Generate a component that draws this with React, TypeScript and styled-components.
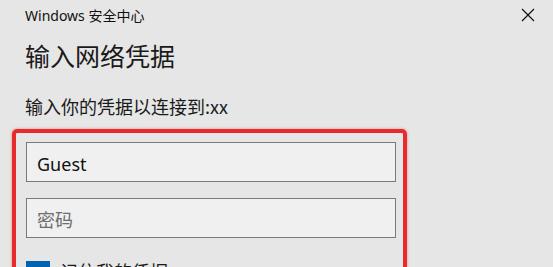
import React from "react";
import styled, { createGlobalStyle } from "styled-components";

const Global = createGlobalStyle`
  html, body { margin: 0; padding: 0; background: #e6e6e6; }
  body { font-family: "Segoe UI", "Noto Sans", "Noto Sans CJK SC", sans-serif; }
`;

const Dialog = styled.div`
  width: 553px;
  height: 267px;
  overflow: hidden;
  background: #e6e6e6;
  display: flex;
  flex-direction: column;
`;

const TitleBar = styled.div`
  display: flex;
  align-items: center;
  justify-content: space-between;
  height: 32px;
  padding: 0 10px 0 25px;
`;

const AppName = styled.span`
  font-size: 14px;
  color: #111;
  font-family: "Noto Sans", "Noto Sans CJK SC", sans-serif;
`;

const CloseButton = styled.button`
  width: 30px;
  height: 30px;
  border: none;
  background: transparent;
  display: flex;
  align-items: center;
  justify-content: center;
  padding: 0;
`;

const Heading = styled.h1`
  margin: 9px 0 0 25px;
  font-size: 25px;
  font-weight: 400;
  line-height: 32px;
  color: #1a1a1a;
  font-family: "Noto Sans CJK SC", sans-serif;
`;

const Subtitle = styled.p`
  margin: 23px 0 0 25px;
  font-size: 18px;
  line-height: 24px;
  color: #1a1a1a;
  font-family: "Noto Sans CJK SC", sans-serif;
`;

const Highlight = styled.div`
  margin: 11px 0 0 12px;
  width: 395px;
  box-sizing: border-box;
  border: 4px solid #e52b2b;
  border-radius: 5px;
  box-shadow: 0 0 2px 1px rgba(240, 150, 150, 0.6);
  padding: 9px 6px 0 10px;
  display: flex;
  flex-direction: column;
  gap: 16px;
`;

const Field = styled.input`
  width: 370px;
  height: 40px;
  box-sizing: border-box;
  border: 1px solid #7a7a7a;
  background: #f0f0f0;
  padding: 3px 10px 0;
  font-size: 18px;
  color: #111;
  font-family: "Noto Sans", "Noto Sans CJK SC", sans-serif;
  outline: none;
  &::placeholder { color: #6d6d6d; }
`;

const CheckRow = styled.label`
  display: flex;
  align-items: flex-start;
  gap: 10px;
  margin-top: 7px;
  font-size: 18px;
  line-height: 18px;
  color: #1a1a1a;
  font-family: "Noto Sans CJK SC", sans-serif;
`;

const Box = styled.span`
  width: 24px;
  height: 24px;
  background: #0063b1;
  flex: none;
`;

const CheckText = styled.span`
  padding-top: 1px;
`;

export default function App() {
  return (
    <Dialog>
      <Global />
      <TitleBar>
        <AppName>Windows 安全中心</AppName>
        <CloseButton aria-label="关闭">
          <svg width="14" height="14" viewBox="0 0 14 14">
            <path d="M1 1L13 13M13 1L1 13" stroke="#111" strokeWidth="1.2" fill="none" />
          </svg>
        </CloseButton>
      </TitleBar>
      <Heading>输入网络凭据</Heading>
      <Subtitle>输入你的凭据以连接到:xx</Subtitle>
      <Highlight>
        <Field defaultValue="Guest" />
        <Field placeholder="密码" type="password" />
        <CheckRow>
          <Box />
          <CheckText>记住我的凭据</CheckText>
        </CheckRow>
      </Highlight>
    </Dialog>
  );
}
